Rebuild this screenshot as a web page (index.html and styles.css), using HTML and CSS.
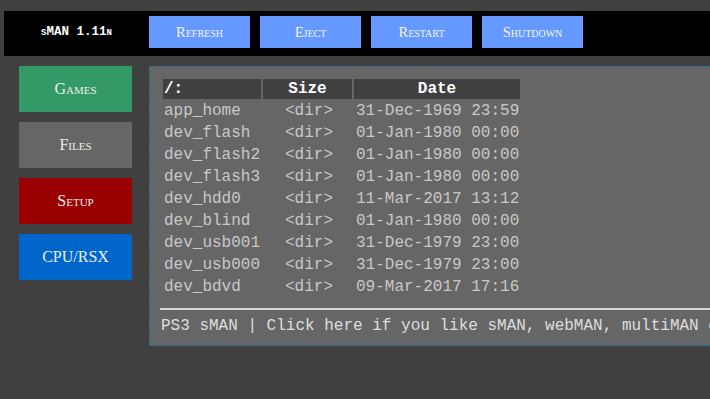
FILE: index.html
```html
<!DOCTYPE html>
<html>
<head>
<meta charset="utf-8">
<link rel="stylesheet" href="styles.css">
</head>
<body>
<div class="top">
  <div class="brand">sMAN 1.11n</div>
  <a class="tbtn">Refresh</a>
  <a class="tbtn">Eject</a>
  <a class="tbtn">Restart</a>
  <a class="tbtn">Shutdown</a>
</div>
<div class="main">
  <nav class="nav">
    <a class="nbtn games">Games</a>
    <a class="nbtn files">Files</a>
    <a class="nbtn setup">Setup</a>
    <a class="nbtn cpu">CPU/RSX</a>
  </nav>
  <div class="panel">
    <table class="list">
      <thead>
        <tr><th class="c1">/:</th><th class="c2">Size</th><th class="c3">Date</th></tr>
      </thead>
      <tbody>
        <tr><td>app_home</td><td class="sz">&lt;dir&gt;</td><td>31-Dec-1969 23:59</td></tr>
        <tr><td>dev_flash</td><td class="sz">&lt;dir&gt;</td><td>01-Jan-1980 00:00</td></tr>
        <tr><td>dev_flash2</td><td class="sz">&lt;dir&gt;</td><td>01-Jan-1980 00:00</td></tr>
        <tr><td>dev_flash3</td><td class="sz">&lt;dir&gt;</td><td>01-Jan-1980 00:00</td></tr>
        <tr><td>dev_hdd0</td><td class="sz">&lt;dir&gt;</td><td>11-Mar-2017 13:12</td></tr>
        <tr><td>dev_blind</td><td class="sz">&lt;dir&gt;</td><td>01-Jan-1980 00:00</td></tr>
        <tr><td>dev_usb001</td><td class="sz">&lt;dir&gt;</td><td>31-Dec-1979 23:00</td></tr>
        <tr><td>dev_usb000</td><td class="sz">&lt;dir&gt;</td><td>31-Dec-1979 23:00</td></tr>
        <tr><td>dev_bdvd</td><td class="sz">&lt;dir&gt;</td><td>09-Mar-2017 17:16</td></tr>
      </tbody>
    </table>
    <div class="rule"></div>
    <div class="foot">PS3 sMAN | Click here if you like sMAN, webMAN, multiMAN o</div>
  </div>
</div>
</body>
</html>
```
FILE: styles.css
```css
html, body {
  margin: 0;
  padding: 0;
  overflow: hidden;
}
body {
  background: #404040;
  width: 710px;
  height: 399px;
}
.top {
  margin: 11px 0 0 4px;
  height: 45px;
  box-sizing: border-box;
  padding-top: 5px;
  background: #000;
  display: flex;
  align-items: flex-start;
}
.brand {
  width: 145px;
  flex-shrink: 0;
  height: 32px;
  line-height: 32px;
  text-align: center;
  color: #fff;
  font-family: "Liberation Mono", monospace;
  font-weight: bold;
  font-size: 12.5px;
  font-variant: small-caps;
}
.tbtn {
  width: 101px;
  height: 32px;
  line-height: 32px;
  margin-right: 10px;
  flex-shrink: 0;
  background: #6699ff;
  color: #f4f4f4;
  text-align: center;
  font-family: "Liberation Serif", serif;
  font-size: 14.5px;
  font-variant: small-caps;
}
.main {
  display: flex;
  align-items: flex-start;
  margin-top: 10px;
  padding-left: 19px;
}
.nav {
  display: flex;
  flex-direction: column;
  gap: 10px;
  width: 113px;
  margin-right: 17px;
  flex-shrink: 0;
}
.nbtn {
  height: 46px;
  line-height: 46px;
  text-align: center;
  color: #eeeeee;
  font-family: "Liberation Serif", serif;
  font-size: 16px;
  font-variant: small-caps;
}
.games { background: #339966; }
.files { background: #666666; }
.setup { background: #990000; }
.cpu { background: #0066cc; }
.panel {
  flex-shrink: 0;
  width: 550px;
  background: #666666;
  border: 1px dashed #1f6e9e;
  border-right: none;
  padding: 10px 0 10px 10px;
}
.list {
  border-collapse: separate;
  border-spacing: 2px;
  margin-left: 1px;
  font-family: "Liberation Mono", monospace;
  font-size: 16px;
}
.list th {
  background: #404040;
  color: #ffffff;
  font-weight: bold;
  height: 20px;
  padding: 0;
  line-height: 18px;
}
.list th.c1 { width: 98px; text-align: left; padding-left: 1px; box-sizing: border-box; }
.list th.c2 { width: 89px; text-align: center; }
.list th.c3 { width: 166px; text-align: center; }
.list td {
  color: #c8c8c8;
  height: 20px;
  padding: 0 0 0 1px;
  line-height: 18px;
  white-space: nowrap;
}
.list td:last-child { padding-left: 2px; }
.list td.sz { text-align: center; padding-left: 3px; }
.rule {
  margin-top: 9px;
  border-top: 2px solid #d8d8d8;
}
.foot {
  margin: 7px 0 0 1px;
  color: #dedede;
  font-family: "Liberation Mono", monospace;
  font-size: 16px;
  line-height: 18px;
  white-space: nowrap;
  overflow: hidden;
}
```
